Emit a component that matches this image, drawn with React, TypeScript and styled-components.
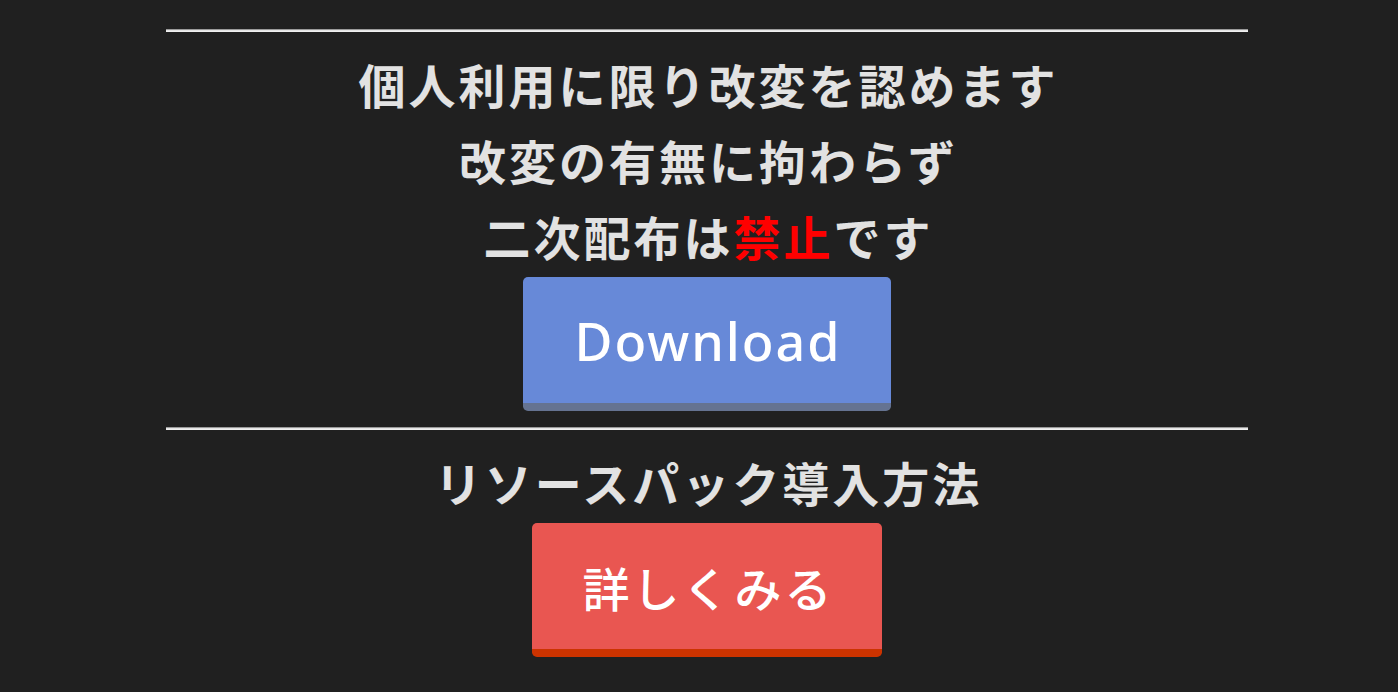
import React from "react";
import styled, { createGlobalStyle } from "styled-components";

const GlobalStyle = createGlobalStyle`
  html, body {
    margin: 0;
    padding: 0;
    background: #202020;
  }
  body {
    font-family: "Noto Sans CJK JP", "Noto Sans", sans-serif;
  }
`;

const Page = styled.div`
  width: 1082px;
  margin-left: 166px;
  padding-top: 29px;
  display: flex;
  flex-direction: column;
  align-items: center;
`;

const Rule = styled.hr`
  align-self: stretch;
  margin: 0 0 16px 0;
  height: 1px;
  border: none;
  border-top: 1px solid #9a9a9a;
  border-bottom: 1px solid #f0f0f0;
  background: #e4e4e4;
`;

const Message = styled.div`
  display: flex;
  flex-direction: column;
  align-items: center;
`;

const Line = styled.p`
  margin: 0;
  height: 76px;
  line-height: 72px;
  font-size: 47px;
  font-weight: 700;
  letter-spacing: 3px;
  margin-right: -3px;
  color: #e2e2e2;
  white-space: nowrap;
`;

const Warn = styled.span`
  color: #ff0000;
`;

const Button = styled.a<{ $bg: string; $edge: string }>`
  display: flex;
  align-items: center;
  justify-content: center;
  box-sizing: border-box;
  height: 134px;
  margin-top: 1px;
  padding: 0 51px;
  border-radius: 5px;
  background: ${(p) => p.$bg};
  border-bottom: 8px solid ${(p) => p.$edge};
  color: #ffffff;
  text-decoration: none;
  white-space: nowrap;
  margin-bottom: 16px;
`;

const LatinLabel = styled.span`
  font-family: "Noto Sans", "Noto Sans CJK JP", sans-serif;
  font-size: 52px;
  font-weight: 500;
  letter-spacing: 2px;
  margin-right: -2px;
`;

const JpLabel = styled.span`
  font-size: 47px;
  font-weight: 500;
  letter-spacing: 3px;
  margin-right: -3px;
`;

export default function App() {
  return (
    <>
      <GlobalStyle />
      <Page>
        <Rule />
        <Message>
          <Line>個人利用に限り改変を認めます</Line>
          <Line>改変の有無に拘わらず</Line>
          <Line>
            二次配布は<Warn>禁止</Warn>です
          </Line>
        </Message>
        <Button href="#" $bg="#6789d8" $edge="#657391">
          <LatinLabel>Download</LatinLabel>
        </Button>
        <Rule />
        <Line>リソースパック導入方法</Line>
        <Button href="#" $bg="#e95651" $edge="#cc3300">
          <JpLabel>詳しくみる</JpLabel>
        </Button>
      </Page>
    </>
  );
}
